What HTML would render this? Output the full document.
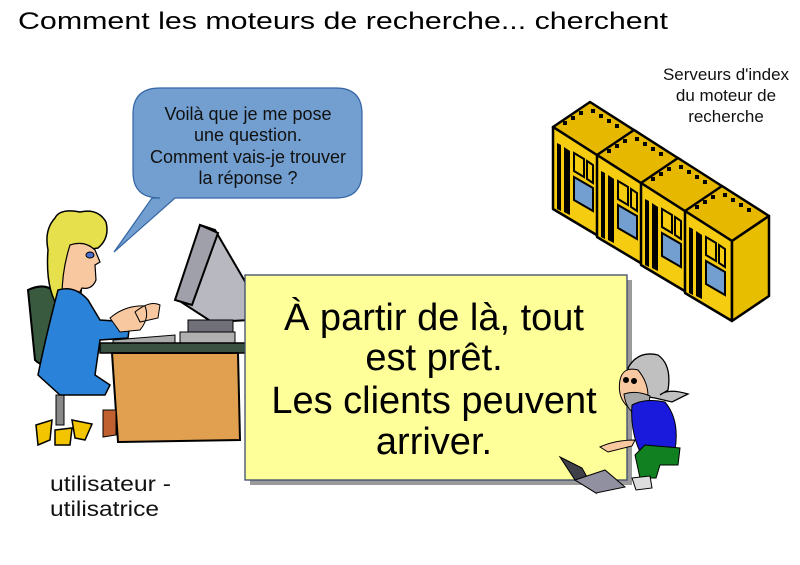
<!DOCTYPE html>
<html><head><meta charset="utf-8"><style>
html,body{margin:0;padding:0;background:#fff;width:800px;height:565px;overflow:hidden}
svg{display:block}
text{font-family:"Liberation Sans",Arial,sans-serif}
</style></head><body>
<svg width="800" height="565" viewBox="0 0 800 565" xmlns="http://www.w3.org/2000/svg">
<text x="18" y="29" font-size="24" textLength="650" lengthAdjust="spacingAndGlyphs">Comment les moteurs de recherche... cherchent</text>

<!-- speech bubble -->
<path d="M160,88 H336 Q362,88 362,114 V172 Q362,198 336,198 H175 L114,252 L152,198 H160 Q133,198 133,172 V114 Q133,88 160,88 Z" fill="#729fcf" stroke="#3465a4" stroke-width="1.2"/>
<g font-size="18" text-anchor="middle" fill="#111">
<text x="248" y="120">Voilà que je me pose</text>
<text x="248" y="141">une question.</text>
<text x="248" y="163">Comment vais-je trouver</text>
<text x="248" y="184">la réponse ?</text>
</g>

<!-- server labels -->
<g font-size="17" text-anchor="middle" fill="#111">
<text x="726" y="80">Serveurs d'index</text>
<text x="726" y="101">du moteur de</text>
<text x="726" y="122">recherche</text>
</g>

<!-- servers -->
<defs>
<g id="srv">
<path d="M0,0 L37,-25 L84,5 L47,30 Z" fill="#e6b800" stroke="#000" stroke-width="2.5" stroke-linejoin="round"/>
<path d="M0,0 L47,30 L47,110 L0,82 Z" fill="#f5cc10" stroke="#000" stroke-width="2.5" stroke-linejoin="round"/>
<path d="M47,30 L84,5 L84,85 L47,110 Z" fill="#e8be00" stroke="#000" stroke-width="2.5" stroke-linejoin="round"/>
<g fill="#000"><rect x="10" y="-6" width="4" height="4"/><rect x="18" y="-11" width="4" height="4"/><rect x="26" y="-16" width="4" height="4"/><rect x="38" y="-18" width="4" height="4"/><rect x="46" y="-13" width="4" height="4"/><rect x="54" y="-8" width="4" height="4"/><rect x="62" y="-3" width="4" height="4"/></g>
<path d="M4,16 L8,18 L8,84 L4,82 Z M11,20 L17,24 L17,88 L11,85 Z" fill="#000"/>
<path d="M21,26 L31,32 L31,50 L21,44 Z M34,34 L40,38 L40,56 L34,52 Z" fill="none" stroke="#000" stroke-width="2"/>
<path d="M21,50 L40,61 L40,84 L21,73 Z" fill="#729fcf" stroke="#000" stroke-width="2"/>
</g>
</defs>
<use href="#srv" transform="translate(553,127)"/>
<use href="#srv" transform="translate(597,155)"/>
<use href="#srv" transform="translate(641,183)"/>
<use href="#srv" transform="translate(685,211)"/>

<!-- chair -->
<path d="M28,290 Q45,282 55,292 L60,360 Q45,370 35,360 Z" fill="#3a5a40" stroke="#000" stroke-width="2"/>
<rect x="56" y="395" width="8" height="30" fill="#888" stroke="#000"/>
<path d="M36,425 L52,420 L50,440 L38,445 Z M55,430 L72,428 L70,445 L55,445 Z M72,420 L92,424 L85,440 L75,438 Z" fill="#f2c500" stroke="#000" stroke-width="1.5"/>
<!-- hair -->
<path d="M55,218 Q60,208 80,212 Q98,208 106,222 Q110,238 98,248 L85,250 Q84,270 80,300 L60,310 Q45,290 48,250 Q44,230 55,218 Z" fill="#e6e04c" stroke="#000" stroke-width="1.5"/>
<path d="M70,245 Q85,240 95,250 L100,262 L95,265 L96,280 Q92,290 82,288 L75,300 L62,296 Q62,270 70,245 Z" fill="#f8c8a0" stroke="#000" stroke-width="1.2"/>
<ellipse cx="90" cy="255" rx="4" ry="3" fill="#4a6fd0" stroke="#000"/>
<path d="M58,290 Q75,285 88,300 L100,320 L130,322 L128,338 L100,340 L95,375 L110,385 L105,395 L60,395 L38,375 Q45,340 58,290 Z" fill="#2a83d8" stroke="#000" stroke-width="1.5"/>
<path d="M110,318 Q125,305 145,306 Q150,318 140,330 L120,332 Z M135,312 Q150,300 160,305 L158,318 L140,322 Z" fill="#f8c8a0" stroke="#000"/>
<!-- monitor -->
<path d="M200,225 L215,230 L250,290 L250,320 L212,322 L178,300 Z" fill="#b8b8c0" stroke="#000" stroke-width="2"/>
<path d="M200,225 L218,233 L192,305 L175,300 Z" fill="#a0a0aa" stroke="#000" stroke-width="2"/>
<rect x="188" y="320" width="45" height="15" fill="#707078" stroke="#000"/>
<rect x="180" y="332" width="55" height="12" fill="#b0b0b0" stroke="#000"/>
<path d="M113,340 L175,335 L175,345 L113,348 Z" fill="#aaa" stroke="#000"/>
<rect x="100" y="343" width="148" height="10" fill="#3a5040" stroke="#000" stroke-width="1.5"/>
<path d="M112,353 L238,353 L240,440 L118,442 Z" fill="#e0a050" stroke="#000" stroke-width="2"/>
<path d="M103,410 L116,410 L116,435 L103,437 Z" fill="#c06030" stroke="#000"/>
<g font-size="21" fill="#111">
<text x="50" y="491" textLength="121" lengthAdjust="spacingAndGlyphs">utilisateur -</text>
<text x="50" y="516" textLength="109" lengthAdjust="spacingAndGlyphs">utilisatrice</text>
</g>

<!-- yellow box -->
<rect x="250" y="280" width="382" height="205" fill="#9a9a9a"/>
<rect x="245" y="275" width="382" height="205" fill="#ffff99" stroke="#3c4a6a" stroke-width="1.3"/>
<g font-size="38" text-anchor="middle" fill="#000">
<text x="434" y="330">À partir de là, tout</text>
<text x="434" y="370">est prêt.</text>
<text x="434" y="413">Les clients peuvent</text>
<text x="434" y="454">arriver.</text>
</g>

<!-- old man -->
<path d="M628,368 Q638,350 658,355 Q672,365 668,390 L660,395 Q668,388 688,394 L672,402 L655,398 L635,395 Z" fill="#c0c0c0" stroke="#000" stroke-width="1.3"/>
<path d="M620,380 Q623,366 638,370 Q648,382 648,396 Q640,410 628,407 Q617,397 620,380 Z" fill="#f8c8a0" stroke="#000"/>
<circle cx="626" cy="380" r="3" fill="#000"/><circle cx="634" cy="381" r="3" fill="#000"/>
<path d="M624,394 Q636,390 650,396 Q648,414 636,414 Q626,410 624,394 Z" fill="#a8a8a8" stroke="#000"/>
<path d="M632,405 Q645,398 665,402 Q680,420 675,450 L640,452 Q630,430 632,405 Z" fill="#1a1adc" stroke="#000"/>
<path d="M645,445 L680,448 L678,465 L660,465 L656,478 L640,478 L635,455 Z" fill="#108020" stroke="#000"/>
<path d="M600,447 Q615,440 635,440 L632,446 L608,452 Z" fill="#f8c8a0" stroke="#000"/>
<path d="M560,457 L582,468 L596,493 L575,480 Z" fill="#404048" stroke="#000"/>
<path d="M575,480 L596,493 L625,487 L605,470 Z" fill="#9090a0" stroke="#000"/>
<path d="M632,478 L650,476 L652,488 L636,490 Z" fill="#ddd" stroke="#000"/>
</svg>
</body></html>
